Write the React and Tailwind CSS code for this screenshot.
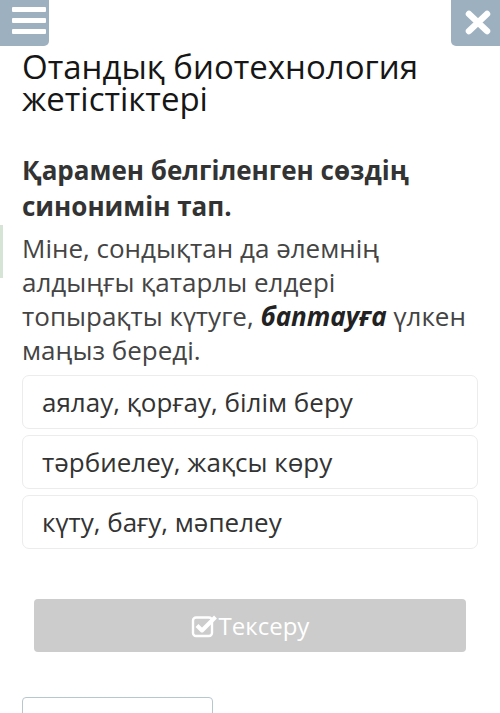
import React from "react";

const options = [
  "аялау, қорғау, білім беру",
  "тәрбиелеу, жақсы көру",
  "күту, бағу, мәпелеу",
];

export default function App() {
  return (
    <div
      className="relative w-[500px] h-[713px] overflow-hidden bg-white text-[#222]"
      style={{ fontFamily: '"Open Sans", "Noto Sans", sans-serif' }}
    >
      {/* top bar: menu and close buttons */}
      <div className="flex justify-between h-[46px]">
        <div className="w-[49px] h-[46px] bg-[#9db0bf] rounded-br-[5px] flex flex-col gap-[6px] pl-[12px] pt-[7px]">
          <span className="block w-[34px] h-[5px] bg-white rounded-[1px]" />
          <span className="block w-[34px] h-[5px] bg-white rounded-[1px]" />
          <span className="block w-[34px] h-[5px] bg-white rounded-[1px]" />
        </div>
        <div className="w-[49px] h-[46px] bg-[#9db0bf] rounded-bl-[5px] pl-[13px] pt-[9px]">
          <svg width="28" height="27" viewBox="0 0 28 27">
            <path d="M5 5 L23 22 M23 5 L5 22" stroke="white" strokeWidth="6.5" strokeLinecap="round" />
          </svg>
        </div>
      </div>

      <div className="px-[22px]">
        <h1 className="mt-[5px] text-[33px] leading-[32px] font-normal text-[#161616]">
          Отандық биотехнология жетістіктері
        </h1>

        <p className="mt-[37px] text-[26px] leading-[36px] font-bold text-[#333]">
          Қарамен белгіленген сөздің синонимін тап.
        </p>
      </div>

      <div className="relative mt-[7px]">
        <div className="absolute left-0 top-[-6px] w-[3px] h-[53px] bg-[#d6e4d6]" />
        <p className="px-[22px] text-[26px] leading-[34px] text-[#444]">
          Міне, сондықтан да әлемнің алдыңғы қатарлы елдері топырақты күтуге,{" "}
          <b className="italic font-bold text-[#222]">баптауға</b> үлкен маңыз береді.
        </p>
      </div>

      <div className="px-[22px] mt-[8px] flex flex-col gap-[6px]">
        {options.map((o) => (
          <div
            key={o}
            className="h-[54px] border border-[#ececec] rounded-[7px] flex items-center pl-[19px] text-[26px] text-[#333]"
          >
            {o}
          </div>
        ))}
      </div>

      <div className="px-[34px] mt-[50px]">
        <div className="h-[53px] bg-[#cccccc] rounded-[4px] flex items-center justify-center text-white text-[24px]">
          <svg width="27" height="24" viewBox="0 0 27 24" className="mr-[1px] mt-[1px]">
            <rect x="2" y="3.5" width="19" height="18.5" rx="3" fill="none" stroke="white" strokeWidth="2.4" />
            <path d="M6 11.5 L11 16.5 L24.5 3" fill="none" stroke="white" strokeWidth="4" strokeLinejoin="round" />
          </svg>
          <span>Тексеру</span>
        </div>
      </div>

      <div className="absolute left-[22px] top-[697px] w-[191px] h-[30px] border border-[#b6c7ce] rounded-[4px]" />
    </div>
  );
}
